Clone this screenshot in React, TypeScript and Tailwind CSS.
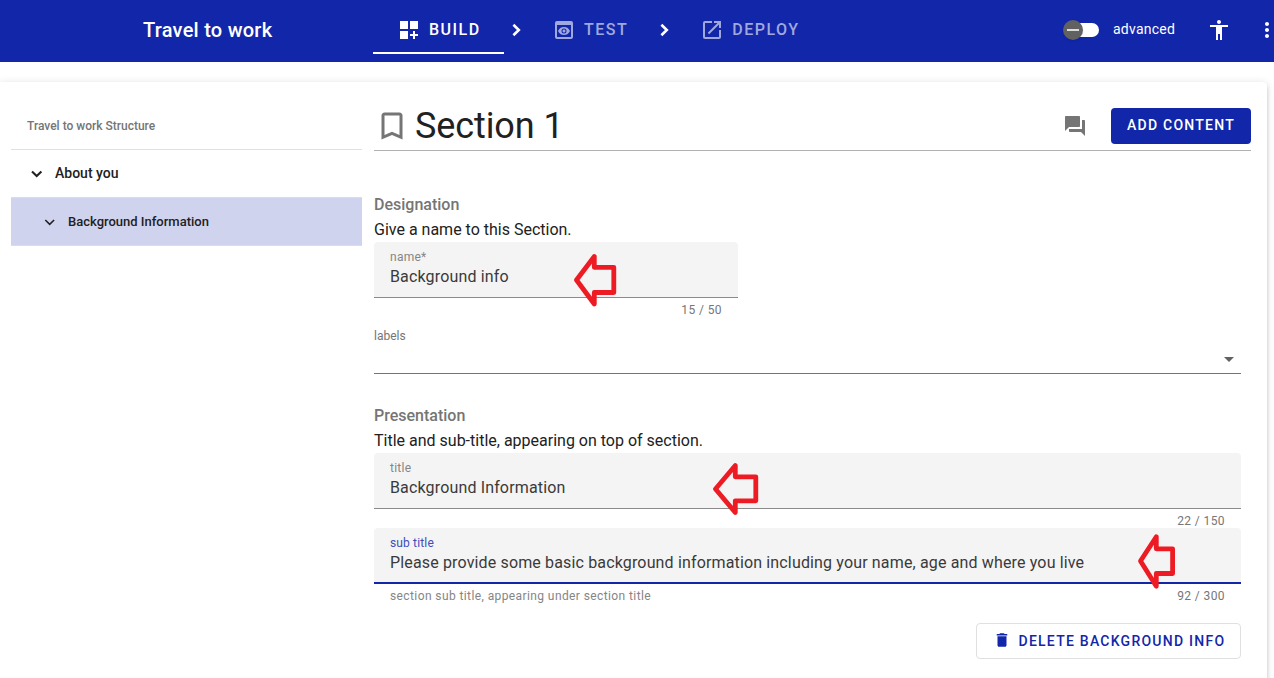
import React from "react";
import {
  MdAccessibility,
  MdArrowDropDown,
  MdBookmarkBorder,
  MdDashboardCustomize,
  MdDelete,
  MdMoreVert,
  MdOpenInNew,
  MdPreview,
  MdQuestionAnswer,
} from "react-icons/md";

type TabProps = { icon: React.ReactNode; label: string; active?: boolean };

function Tab({ icon, label, active = false }: TabProps) {
  return (
    <div
      className={
        active
          ? "flex h-[46px] w-[131px] items-center border-b-2 border-white pl-6 text-white"
          : "flex h-[46px] items-center border-b-2 border-transparent px-6 text-[#a0a8dd]"
      }
    >
      {icon}
      <span className="-mt-px ml-2 text-base leading-6 font-medium tracking-[1.5px]">{label}</span>
    </div>
  );
}

function Separator() {
  return (
    <svg className="size-6 shrink-0" viewBox="0 0 24 24" fill="none" stroke="currentColor" strokeWidth="2.6">
      <path d="M9.4 5.8 14.8 11 9.4 16.2" />
    </svg>
  );
}

function Header() {
  return (
    <header className="flex h-[62px] shrink-0 overflow-hidden bg-[#1226aa] text-white">
      <h1 className="w-[373px] shrink-0 pt-[18px] pl-[143px] text-xl leading-6 font-medium tracking-[0.25px]">
        Travel to work
      </h1>
      <nav className="mt-2 flex h-[46px] shrink-0 items-center">
        <Tab icon={<MdDashboardCustomize className="size-6" />} label="BUILD" active />
        <Separator />
        <Tab icon={<MdPreview className="size-6" />} label="TEST" />
        <Separator />
        <Tab icon={<MdOpenInNew className="size-6" />} label="DEPLOY" />
      </nav>
      <div className="ml-auto flex h-[60px] w-[211px] shrink-0 items-center">
        <div className="ml-[2px] flex h-3.5 w-[34px] shrink-0 items-center rounded-full bg-white">
          <div className="-ml-[2px] flex size-5 items-center justify-center rounded-full bg-[#616161] shadow">
            <div className="h-0.5 w-3 bg-[#dcdcdc]" />
          </div>
        </div>
        <span className="-mt-0.5 ml-3.5 w-[94px] shrink-0 text-sm leading-5 tracking-[0.25px]">advanced</span>
        <MdAccessibility className="size-6 shrink-0" />
        <MdMoreVert className="ml-6 size-6 shrink-0" />
      </div>
    </header>
  );
}

function Structure() {
  return (
    <aside className="ml-[11px] w-[351px] shrink-0 text-[#212121]">
      <div className="h-[68px] border-b border-[#e0e0e0] pt-[34px] pl-4 text-xs leading-5 font-medium text-[#757575]">
        Travel to work Structure
      </div>
      <div className="flex h-[47px] items-center pl-[18px]">
        <svg className="size-4" viewBox="0 0 16 16" fill="none" stroke="currentColor" strokeWidth="2.1">
          <path d="M3 5.6 7.7 10.1 12.4 5.6" />
        </svg>
        <span className="-mt-px ml-2.5 text-sm leading-5 font-medium">About you</span>
      </div>
      <div className="flex h-[49px] items-center border-y border-[#dcdde4] bg-[#d0d3ee] pl-[31px]">
        <svg className="size-4" viewBox="0 0 16 16" fill="none" stroke="currentColor" strokeWidth="1.6">
          <path d="M3.3 6 7.7 10.3 12.1 6" />
        </svg>
        <span className="ml-2.5 text-[13px] leading-5 font-medium">Background Information</span>
      </div>
    </aside>
  );
}

type FieldProps = {
  label: string;
  value: string;
  count: string;
  hint?: string;
  focused?: boolean;
};

function Field({ label, value, count, hint, focused = false }: FieldProps) {
  return (
    <div>
      <div
        className={
          focused
            ? "h-14 rounded-t border-b-2 border-[#1226aa] bg-[#f4f4f4] px-4 pt-[5px]"
            : "h-14 rounded-t border-b border-[#8a8a8a] bg-[#f4f4f4] px-4 pt-[5px]"
        }
      >
        <div
          className={
            focused
              ? "text-xs leading-5 tracking-[0.15px] text-[#3d4dbb]"
              : "text-xs leading-5 tracking-[0.25px] text-[#858585]"
          }
        >
          {label}
        </div>
        <div className="text-base leading-5 tracking-[0.15px] text-[#3a3a3a]">{value}</div>
      </div>
      <div className="flex h-[19px] justify-between px-4 pt-[2px] text-xs leading-5 tracking-[0.4px] text-[#767676]">
        <span className="text-[#858585]">{hint}</span>
        <span>{count}</span>
      </div>
    </div>
  );
}

type ArrowProps = { points: string; className: string };

/* Hand-placed callout arrow pointing at a field value. */
function Arrow({ points, className }: ArrowProps) {
  return (
    <svg className={className} viewBox="0 0 48 56" fill="none" stroke="#ed1c24" strokeWidth="4.8" strokeLinejoin="round">
      <polygon points={points} />
    </svg>
  );
}

function SectionForm() {
  return (
    <main className="ml-3 w-[877px] shrink-0 text-[#212121]">
      <div className="flex h-[69px] items-center border-b border-[#b0b0b0] pt-[19px]">
        <MdBookmarkBorder className="size-9 text-[#757575]" />
        <h2 className="ml-[5px] text-4xl leading-10 tracking-[-0.1px]">Section 1</h2>
        <MdQuestionAnswer className="ml-auto size-6 text-[#757575]" />
        <button className="ml-6 h-9 w-[140px] rounded bg-[#1226aa] pb-px text-sm font-medium tracking-[1.25px] text-white">
          ADD CONTENT
        </button>
      </div>
      <section className="w-[867px] pt-[44px]">
        <h3 className="text-base leading-5 font-medium text-[#757575]">Designation</h3>
        <p className="mt-[5px] text-base leading-5">Give a name to this Section.</p>
        <div className="relative mt-[2px] w-[364px]">
          <Field label="name*" value="Background info" count="15 / 50" />
          <Arrow className="absolute top-[10px] left-[198px] h-14 w-12" points="4.5,28 22.3,4.5 22.3,15.3 41.8,15.3 41.8,40.5 22.3,40.5 22.3,52" />
        </div>
        <div className="flex h-[57px] flex-col border-b border-[#757575] pt-[9px]">
          <span className="text-xs leading-5 text-[#757575]">labels</span>
          <MdArrowDropDown className="mt-px size-6 self-end text-[#616161]" />
        </div>
      </section>
      <section className="w-[867px] pt-8">
        <h3 className="text-base leading-5 font-medium text-[#757575]">Presentation</h3>
        <p className="mt-[5px] text-base leading-5">Title and sub-title, appearing on top of section.</p>
        <div className="relative mt-[2px]">
          <Field label="title" value="Background Information" count="22 / 150" />
          <Arrow className="absolute top-[8px] left-[337px] h-14 w-12" points="4.5,28 24.3,4.5 24.3,15.8 44.8,15.8 44.8,39.8 24.3,39.8 24.3,51.5" />
        </div>
        <div className="relative">
          <Field
            label="sub title"
            value="Please provide some basic background information including your name, age and where you live"
            count="92 / 300"
            hint="section sub title, appearing under section title"
            focused
          />
          <Arrow className="absolute top-[5px] left-[762px] h-14 w-12" points="4.5,28 20.3,3.8 20.3,15.8 36.6,15.8 36.6,40.5 20.3,40.5 20.3,53.3" />
        </div>
        <div className="flex justify-end pt-5">
          <button className="flex h-9 w-[265px] items-center rounded border border-[#e0e0e0] pl-[15.5px] text-sm font-medium tracking-[1.25px] whitespace-nowrap text-[#1226aa]">
            <MdDelete className="-mt-0.5 size-[18px]" />
            <span className="ml-2">DELETE BACKGROUND INFO</span>
          </button>
        </div>
      </section>
    </main>
  );
}

export default function App() {
  return (
    <div className="flex h-[678px] w-[1274px] flex-col overflow-hidden bg-white font-['Roboto',sans-serif]">
      <Header />
      <div className="flex-1 overflow-hidden pt-5">
        <div className="flex h-[640px] w-[1267px] rounded-r bg-white shadow-[0_3px_3px_-2px_rgba(0,0,0,0.2),0_3px_4px_0_rgba(0,0,0,0.14),0_1px_8px_0_rgba(0,0,0,0.12)]">
          <Structure />
          <SectionForm />
        </div>
      </div>
    </div>
  );
}
